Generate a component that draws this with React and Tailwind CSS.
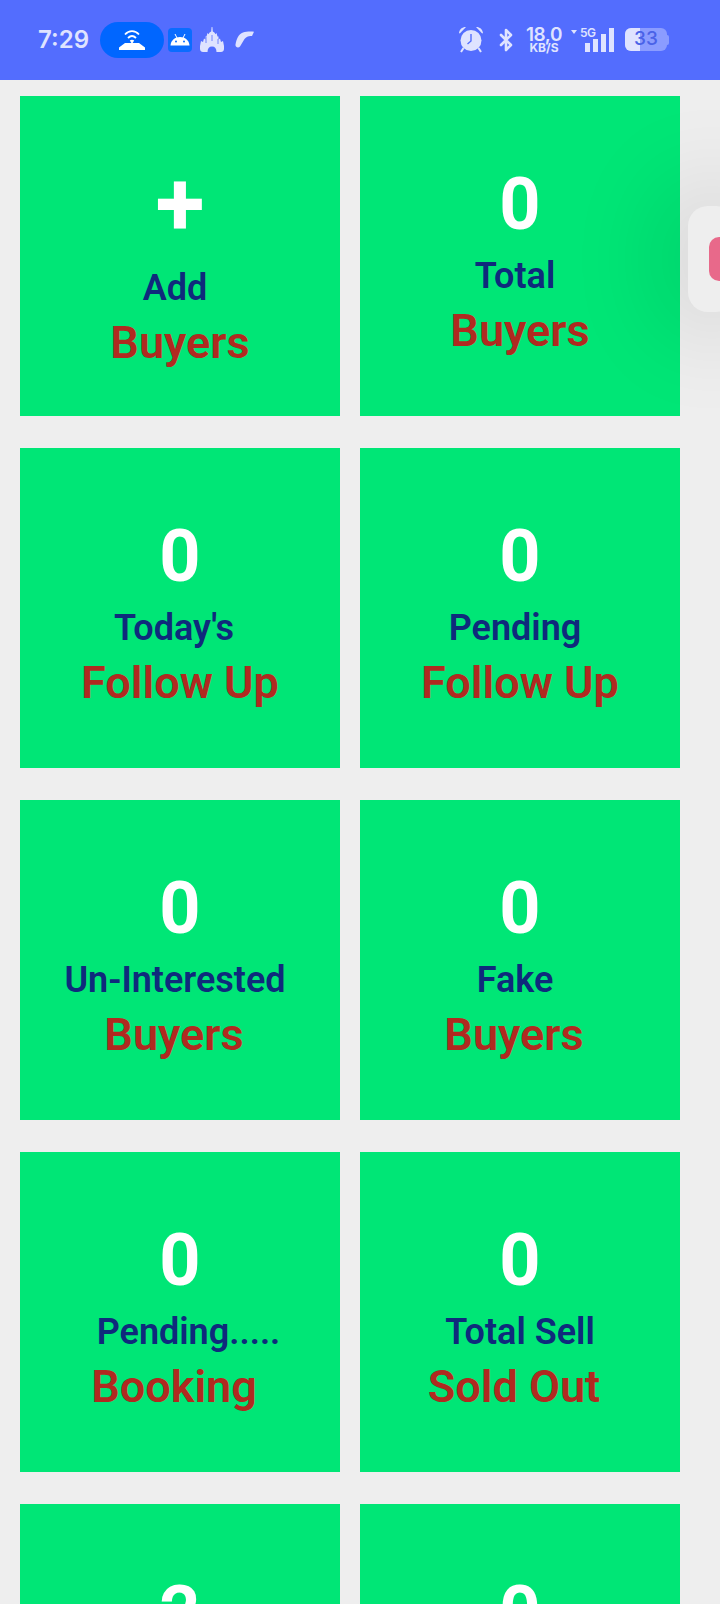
import { Bluetooth } from "lucide-react";

const cards = [
  { top: "+", mid: "Add", bottom: "Buyers", plus: true, midPad: "pr-[10px]" },
  { top: "0", mid: "Total", bottom: "Buyers", midPad: "pr-[10px]" },
  { top: "0", mid: "Today's", bottom: "Follow Up", midPad: "pr-[12px]" },
  { top: "0", mid: "Pending", bottom: "Follow Up", midPad: "pr-[10px]" },
  { top: "0", mid: "Un-Interested", bottom: "Buyers", midPad: "pr-[10px]", botPad: "pr-[12px]" },
  { top: "0", mid: "Fake", bottom: "Buyers", midPad: "pr-[10px]", botPad: "pr-[12px]" },
  { top: "0", mid: "Pending.....", bottom: "Booking", midPad: "pl-[17px]", botPad: "pr-[12px]" },
  { top: "0", mid: "Total Sell", bottom: "Sold Out", botPad: "pr-[12px]" },
  { top: "2", mid: "", bottom: "" },
  { top: "0", mid: "", bottom: "" },
];

function Card({ top, mid, bottom, plus, midPad = "", botPad = "" }) {
  return (
    <div className="w-[320px] h-[320px] bg-[#00e676] flex flex-col items-center pt-[67px] font-['Roboto',sans-serif] font-semibold shrink-0">
      <div className={`text-white font-bold h-[84px] ${plus ? "text-[90px] leading-[84px] mb-[12px]" : "text-[72px] leading-[84px]"}`}>{top}</div>
      <div className={`text-[#0f2a7c] text-[36px] leading-[40px] mt-[9px] ${midPad}`}>{mid}</div>
      <div className={`text-[#b02a20] text-[45px] leading-[52px] mt-[9px] ${botPad}`}>{bottom}</div>
    </div>
  );
}

function StatusBar() {
  return (
    <div className="h-[80px] bg-[#536dfe] flex items-center text-[#dfe3ff] font-['Inter',sans-serif] shrink-0 pb-[1px]">
      <span className="ml-[38px] w-[62px] text-[24px] font-semibold leading-none">7:29</span>
      <div className="w-[64px] h-[36px] rounded-full bg-[#0066ff] flex items-center justify-center">
        <svg width="28" height="22" viewBox="0 0 28 22" fill="none">
          <path d="M7 5.5C11 1 17 1 21 5.5" stroke="#fff" strokeWidth="1.8" />
          <path d="M10 9C12.5 6.5 15.5 6.5 18 9" stroke="#fff" strokeWidth="1.8" />
          <path d="M1 21V18.5L7 14H21L27 18.5V21Z" fill="#fff" />
          <path d="M14 15L11.8 11.5C13 10.4 15 10.4 16.2 11.5Z" fill="#fff" />
        </svg>
      </div>
      <div className="ml-[4px] w-[24px] h-[24px] rounded-[4px] bg-[#0a6cff] flex items-center justify-center">
        <svg width="20" height="13" viewBox="0 0 20 13" fill="#fff">
          <path d="M0.5 12.5C1 7 5 4 10 4S19 7 19.5 12.5Z" />
          <path d="M5 1L7 5M15 1L13 5" stroke="#fff" strokeWidth="1" />
          <circle cx="6" cy="8.5" r="1" fill="#0a6cff" />
          <circle cx="14" cy="8.5" r="1" fill="#0a6cff" />
        </svg>
      </div>
      <svg className="ml-[8px]" width="24" height="25" viewBox="0 0 24 25" fill="#dfe3ff">
        <path d="M11.6 0H12.4L12.8 4.5C14 5 15 6 15.3 7.2L16.5 6L17.5 9.5H18.5V12.5L20 11.5L21 15L23 14L24 19V22C24 24 22.5 25 21 25H16.5C16.5 21.5 15 19.5 12 19.5S7.5 21.5 7.5 25H3C1.5 25 0 24 0 22V19L1 14L3 15L4 11.5L5.5 12.5V9.5H6.5L7.5 6L8.7 7.2C9 6 10 5 11.2 4.5Z" />
        <path d="M6 10V16M12 8V14M18 12V17" stroke="#536dfe" strokeWidth="0.8" />
      </svg>
      <svg className="ml-[11px]" width="19" height="17" viewBox="0 0 19 17" fill="#dfe3ff">
        <path d="M0.5 13.5C1.5 8 3.5 3 8 1.5C11 .5 16 .2 19 .8L17 5C14 4.5 11.5 5.5 9.5 8C8 10.5 6.5 13 5 15.5C3.5 17.5 0 16.5 .5 13.5Z" />
      </svg>

      <svg className="ml-[204px]" width="26" height="27" viewBox="0 0 26 27" fill="#dfe3ff">
        <circle cx="13" cy="14.5" r="10.5" />
        <path d="M1 7C1.5 3 4.5 .8 8 1L1.8 7.5ZM25 7C24.5 3 21.5 .8 18 1L24.2 7.5Z" />
        <path d="M5.5 22L3 26M20.5 22L23 26" stroke="#dfe3ff" strokeWidth="2" />
        <path d="M13 8V15L9.5 18" stroke="#536dfe" strokeWidth="1.4" fill="none" />
      </svg>
      <Bluetooth className="ml-[10px]" size={24} strokeWidth={2.6} color="#dfe3ff" />
      <div className="ml-[5px] w-[42px] flex flex-col items-center font-semibold">
        <span className="text-[19px] leading-[15px] tracking-[-0.5px]">18,0</span>
        <span className="text-[12px] leading-[11px] font-bold">KB/S</span>
      </div>
      <div className="ml-[6px] relative w-[47px] h-[25px]">
        <span className="absolute left-[0px] top-[3px] w-0 h-0 border-x-[3.5px] border-x-transparent border-t-[4px] border-t-[#dfe3ff]" />
        <span className="absolute left-[9px] top-[-1px] text-[12px] leading-[13px] font-semibold tracking-[-0.5px]">5G</span>
        <div className="absolute left-[14px] bottom-0 flex items-end gap-[3px]">
          <div className="w-[5px] h-[9px] bg-[#dfe3ff]" />
          <div className="w-[5px] h-[13px] bg-[#dfe3ff]" />
          <div className="w-[5px] h-[18px] bg-[#dfe3ff]" />
          <div className="w-[5px] h-[24px] bg-[#dfe3ff]" />
        </div>
      </div>
      <div className="ml-[7px] relative w-[42px] h-[23px] rounded-[6px] bg-[#8b9cff] overflow-hidden">
        <div className="w-[15px] h-full bg-[#dfe3ff]" />
        <span className="absolute inset-0 flex items-center justify-center text-[19px] font-medium text-[#4a62e8]">33</span>
      </div>
      <div className="w-[2px] h-[10px] rounded-r-[2px] bg-[#8b9cff]" />
    </div>
  );
}

export default function App() {
  return (
    <div className="relative w-[720px] h-[1604px] overflow-hidden bg-[#eeeeee] flex flex-col">
      <StatusBar />
      <div className="grid grid-cols-[320px_320px] gap-x-[20px] gap-y-[32px] pl-[20px] pt-[16px]">
        {cards.map((c, i) => (
          <Card key={i} {...c} />
        ))}
      </div>

      {/* floating side handle */}
      <div className="absolute left-[688px] top-[206px] w-[48px] h-[106px] rounded-[20px] bg-[#eeeeee] shadow-[0_0_100px_24px_rgba(0,0,0,0.11)] pl-[21px] pt-[31px]">
        <div className="w-[20px] h-[44px] rounded-[10px] bg-[#e8698a]" />
      </div>
    </div>
  );
}
